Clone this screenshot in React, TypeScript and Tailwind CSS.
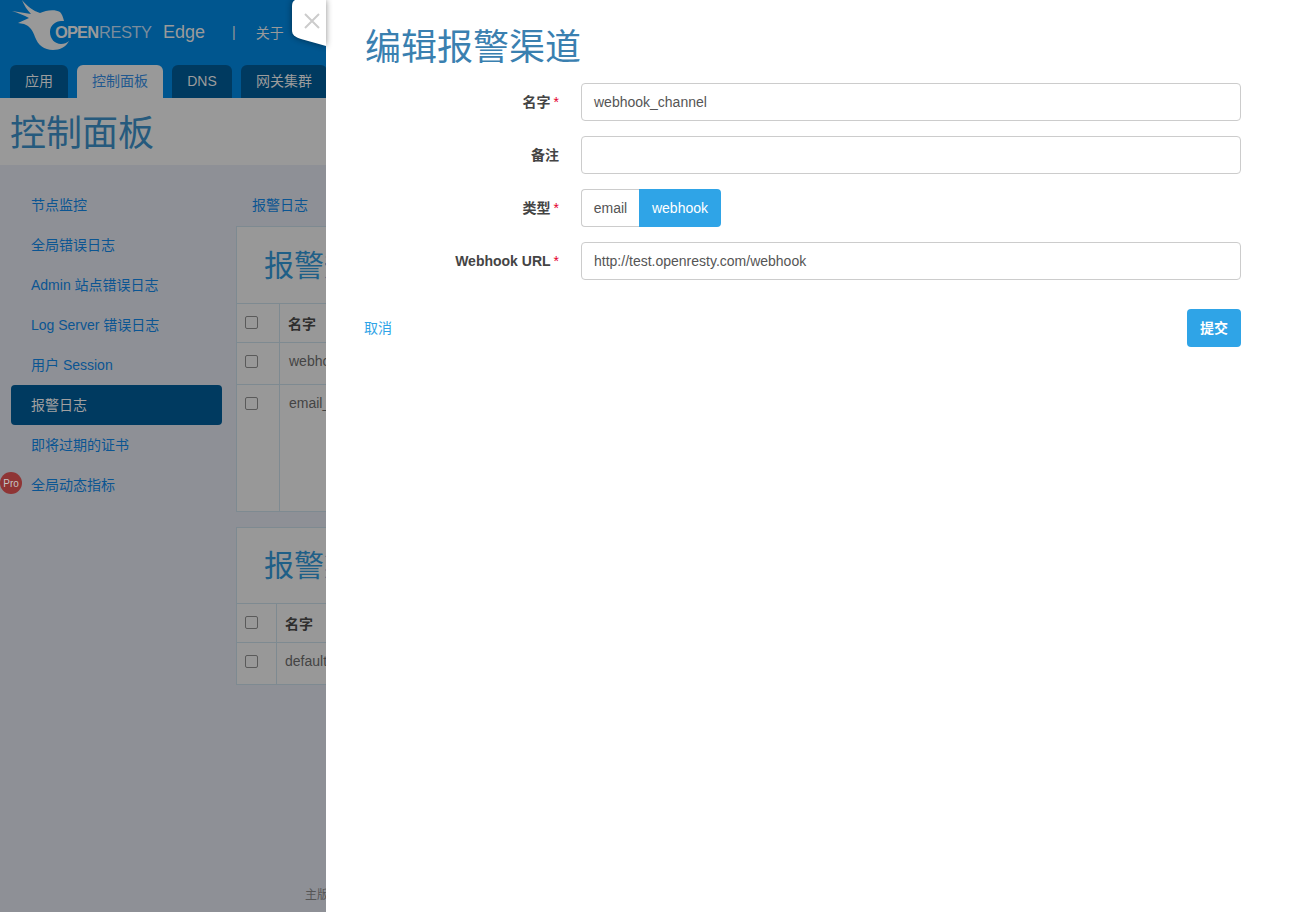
const FONT = "font-['Liberation_Sans','Noto_Sans_CJK_SC',sans-serif]";

function Logo() {
  return (
    <div className="relative w-[156px] h-[54px] shrink-0">
      <svg width="70" height="54" viewBox="0 0 70 54" className="absolute left-0 top-0">
        <path d="M22 0 C27 6 33 11 40 13 C46 10 55 9 60 12 C62 14 63 17 64 21 L61 21 C56 21 50 25 50 32 C50 39 55 44 61 44 C64 44 67 43 69 41 C66 47 60 50 53 50 C44 50 38 45 35 37 C33 31 30 26 24 24 L18 23 L29 18 C24 15 18 13 12 11 L31 14 C27 10 24 5 22 0 Z" fill="#999999" />
      </svg>
      <span className="absolute left-[55px] top-[22px] text-[16.5px] leading-[20px] font-bold tracking-[-0.9px] text-[#9a9a9a]">OPEN</span>
      <span className="absolute left-[99px] top-[22px] text-[16.5px] leading-[20px] tracking-[-0.5px] text-[#7a8c9c]">RESTY</span>
    </div>
  );
}

function Tab({ label, active, w }: { label: string; active?: boolean; w: string }) {
  return (
    <div className={`${w} h-[33px] shrink-0 rounded-t-[6px] flex items-center justify-center text-[14px] ${active ? "bg-[#999999] text-[#21588f]" : "bg-[#003a60] text-[#9c9c9c]"}`}>
      {label}
    </div>
  );
}

function Side({ label, active }: { label: string; active?: boolean }) {
  return (
    <div className={`h-10 pl-5 flex items-center rounded-[4px] text-[14px] ${active ? "bg-[#003a60] text-[#a0a0a0]" : "text-[#0b5592]"}`}>
      {label}
    </div>
  );
}

function Check() {
  return <span className="block w-[13px] h-[13px] rounded-[2px] border border-[#5a5a5a]" />;
}

function Row({ name, h, w, bold, wide }: { name: string; h: string; w: string; bold?: boolean; wide?: boolean }) {
  return (
    <div className={`flex ${h} border-t border-[#7e8a91]`}>
      <div className={`${w} shrink-0 border-r border-[#7e8a91] pl-[8px] pt-[12px]`}>
        <Check />
      </div>
      <div className={`${wide ? "pl-[9px]" : "pl-[8px]"} leading-[20px] text-[14px] whitespace-nowrap ${bold ? "pt-[10px] font-bold text-[#2e2e2e]" : "pt-[8px] text-[#444444]"}`}>{name}</div>
    </div>
  );
}

function Field({ label, value, req }: { label: string; value?: string; req?: boolean }) {
  return (
    <div className="flex items-center h-[38px] mb-[15px]">
      <label className="w-[193px] text-right text-[14px] font-bold text-[#444444] shrink-0">
        {label}
        {req ? <span className="text-[#e4002b] font-normal ml-[3px]">*</span> : null}
      </label>
      <div className="ml-[22px] w-[660px] h-[38px] rounded-[4px] border border-[#cccccc] flex items-center px-3 text-[14px] text-[#555555] bg-white">
        {value}
      </div>
    </div>
  );
}

export default function App() {
  return (
    <div className={`${FONT} relative flex w-full h-[912px] overflow-hidden bg-white`}>
      <div className="w-[326px] shrink-0 h-full overflow-hidden bg-[#8e9096] relative">
        <div className="w-[1313px] h-[98px] bg-[#00568f] flex flex-col">
          <div className="h-[65px] flex items-start">
            <Logo />
            <span className="ml-[7px] mt-[20px] text-[18px] leading-[24px] text-[#9a9a9a]">Edge</span>
            <span className="ml-[27px] mt-[21px] text-[14px] leading-[22px] text-[#9a9a9a]">|</span>
            <span className="ml-[20px] mt-[23px] text-[14px] leading-[20px] text-[#9a9a9a]">关于</span>
          </div>
          <div className="flex gap-[9px] pl-[10px]">
            <Tab label="应用" w="w-[58px]" />
            <Tab label="控制面板" w="w-[86px]" active />
            <Tab label="DNS" w="w-[60px]" />
            <Tab label="网关集群" w="w-[86px]" />
          </div>
        </div>
        <div className="w-full h-[67px] bg-[#999999] pl-[10px] pt-[4px] flex items-center text-[36px] text-[#265a7d] whitespace-nowrap">
          控制面板
        </div>
        <div className="flex pt-[20px]">
          <div className="w-[211px] ml-[11px] shrink-0 flex flex-col">
            <Side label="节点监控" />
            <Side label="全局错误日志" />
            <Side label="Admin 站点错误日志" />
            <Side label="Log Server 错误日志" />
            <Side label="用户 Session" />
            <Side label="报警日志" active />
            <Side label="即将过期的证书" />
            <Side label="全局动态指标" />
          </div>
          <div className="ml-[14px] w-[300px] shrink-0 -mt-[1px]">
            <div className="h-[42px] pl-[16px] pt-[11px] text-[14px] leading-[20px] text-[#0b5592]">报警日志</div>
            <div className="border border-r-0 border-[#7e8a91] bg-[#989898] h-[286px] flex flex-col">
              <div className="h-[76px] pl-[27px] flex items-center text-[30px] text-[#1f5f87] whitespace-nowrap">报警规则</div>
              <Row name="名字" h="h-[39px]" w="w-[43px]" bold />
              <Row name="webhook_channel" h="h-[42px]" w="w-[43px]" wide />
              <Row name="email_channel" h="flex-1" w="w-[43px]" wide />
            </div>
            <div className="mt-[15px] border border-r-0 border-[#7e8a91] bg-[#989898] h-[158px] flex flex-col">
              <div className="h-[75px] pl-[27px] flex items-center text-[30px] text-[#1f5f87] whitespace-nowrap">报警渠道</div>
              <Row name="名字" h="h-[39px]" w="w-[40px]" bold />
              <Row name="default_channel" h="flex-1" w="w-[40px]" />
            </div>
          </div>
        </div>
        <div className="absolute left-0 top-[472px] w-[22px] h-[22px] rounded-full bg-[#8f3535] flex items-center justify-center text-[10px] text-[#c4c4c4]">Pro</div>
        <div className="absolute left-[305px] top-[886px] text-[12px] leading-[18px] text-[#555555] whitespace-nowrap">主版本</div>
      </div>

      <div className="flex-1 h-full bg-white relative">
        <div className="h-[83px] pl-[39px] pt-[23px] text-[36px] leading-[50px] text-[#3a80b0] whitespace-nowrap">编辑报警渠道</div>
        <div className="pl-[40px]">
          <Field label="名字" value="webhook_channel" req />
          <Field label="备注" />
          <div className="flex items-center h-[38px] mb-[15px]">
            <label className="w-[193px] text-right text-[14px] font-bold text-[#444444] shrink-0">
              类型<span className="text-[#e4002b] font-normal ml-[3px]">*</span>
            </label>
            <div className="ml-[22px] flex h-[38px] text-[14px]">
              <div className="w-[58px] border border-r-0 border-[#cccccc] rounded-l-[4px] flex items-center justify-center text-[#555555]">email</div>
              <div className="w-[82px] bg-[#2fa4e7] rounded-r-[4px] flex items-center justify-center text-white">webhook</div>
            </div>
          </div>
          <Field label="Webhook URL" value="http://test.openresty.com/webhook" req />
        </div>
        <div className="flex items-center justify-between pl-[38px] w-[915px] mt-[29px]">
          <span className="text-[14px] text-[#2fa4e7]">取消</span>
          <button className="w-[54px] h-[38px] rounded-[4px] bg-[#2fa4e7] text-white text-[14px] font-bold">提交</button>
        </div>
      </div>

      <div className="absolute left-[291px] top-0 w-[35px] h-[46px]">
        <svg width="35" height="46" viewBox="0 0 35 46" className="overflow-visible drop-shadow-[0_0_3px_rgba(0,0,0,0.45)]">
          <path d="M4 0 H35 V46 L10 39 C4 37 1 35 1 30 V6 C1 3 2 1 4 0 Z" fill="#ffffff" />
          <path d="M14 14 L28 28 M28 14 L14 28" stroke="#cccccc" strokeWidth="2" />
        </svg>
      </div>
    </div>
  );
}
